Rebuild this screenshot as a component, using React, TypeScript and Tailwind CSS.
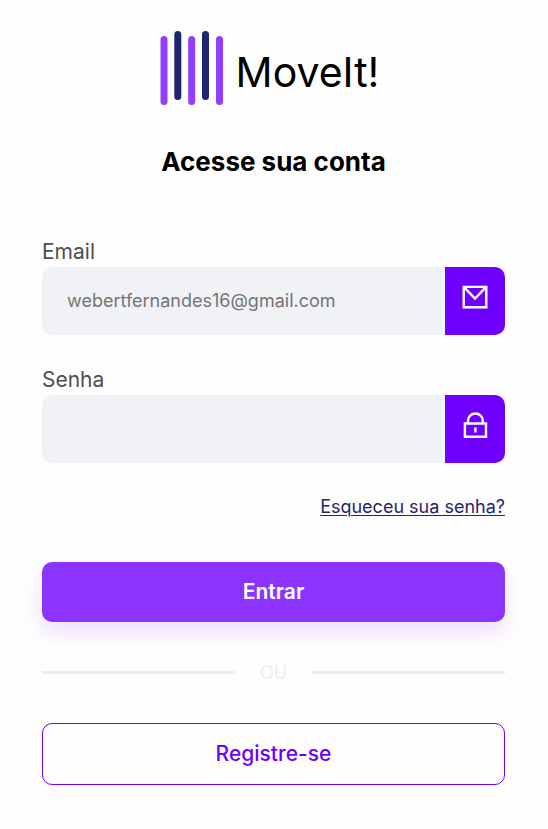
import type { ReactNode } from "react";

function Logo() {
  return (
    <header className="flex h-[76px] justify-center gap-3 pr-2">
      <svg width="64" height="76" viewBox="0 0 64 76" fill="none" strokeWidth="7" strokeLinecap="round" aria-hidden="true">
        <path d="M4 9.500V71.500M31.700 9.500V71.500M59.500 9.500V71.500" stroke="#933fff" />
        <path d="M17.800 4.500V66.500M45.500 4.500V66.500" stroke="#1e266d" />
      </svg>
      <span className="mt-5 text-[41px] leading-[44px] text-black">MoveIt!</span>
    </header>
  );
}

function MailIcon() {
  return (
    <svg width="28" height="28" viewBox="0 0 28 28" fill="none" stroke="currentColor" strokeWidth="2.400" aria-hidden="true">
      <path d="M2.700 3.900H25.300V24.200H2.700ZM3 4.200L14 15.600L25 4.200" />
    </svg>
  );
}

function LockIcon() {
  return (
    <svg width="28" height="28" viewBox="0 0 28 28" fill="none" stroke="currentColor" strokeWidth="2.400" aria-hidden="true">
      <path d="M3.900 12.500H25V25.800H3.900ZM7 12V9.500a7.400 7 0 0 1 14.800 0V12" />
      <path d="M14.400 16.500V21.500" />
    </svg>
  );
}

type FieldProps = { id: string; label: string; type: string; placeholder?: string; icon: ReactNode };

function Field({ id, label, type, placeholder, icon }: FieldProps) {
  return (
    <div className="flex flex-col">
      <label htmlFor={id} className="text-[21px] leading-[30px] text-[#4e4e4e]">{label}</label>
      <div className="flex h-[68px] overflow-hidden rounded-[10px] bg-[#f0f2f6]">
        <input
          id={id}
          type={type}
          placeholder={placeholder}
          className="min-w-0 flex-1 bg-transparent px-[25px] text-lg text-[#757575] outline-none placeholder:text-[#757575]"
        />
        <span className="flex w-[60px] justify-center bg-[#6f00ff] pt-4 text-white">{icon}</span>
      </div>
    </div>
  );
}

export default function App() {
  return (
    <main className="min-h-screen bg-[#fefefe] pt-[30px] pr-[43px] pb-11 pl-[42px] font-['Inter',sans-serif]">
      <Logo />
      <h1 className="mt-9 text-center text-[26px] leading-[39px] font-bold text-black">Acesse sua conta</h1>
      <form className="mt-14 flex flex-col" onSubmit={(event) => event.preventDefault()}>
        <div className="flex flex-col gap-[30px]">
          <Field id="email" label="Email" type="email" placeholder="webertfernandes16@gmail.com" icon={<MailIcon />} />
          <Field id="senha" label="Senha" type="password" icon={<LockIcon />} />
        </div>
        <a href="#senha" className="mt-[30px] self-end text-lg leading-[27px] text-[#1e266d] underline decoration-1 underline-offset-2">
          Esqueceu sua senha?
        </a>
        <button type="submit" className="mt-[42px] h-[60px] rounded-[10px] bg-[#8c34ff] text-[21px] font-semibold text-white shadow-[0_10px_20px_rgba(140,52,255,0.16)]">
          Entrar
        </button>
        <div className="mt-[37px] flex items-center gap-[25px] text-lg leading-[27px] text-[#ededed]">
          <span className="h-[3px] flex-1 bg-[#ededed]" />
          <span>OU</span>
          <span className="h-[3px] flex-1 bg-[#ededed]" />
        </div>
        <button type="button" className="mt-[37px] h-[62px] rounded-[10px] border border-[#6f00ff] text-[21px] font-medium text-[#6f00ff]">
          Registre-se
        </button>
      </form>
    </main>
  );
}
